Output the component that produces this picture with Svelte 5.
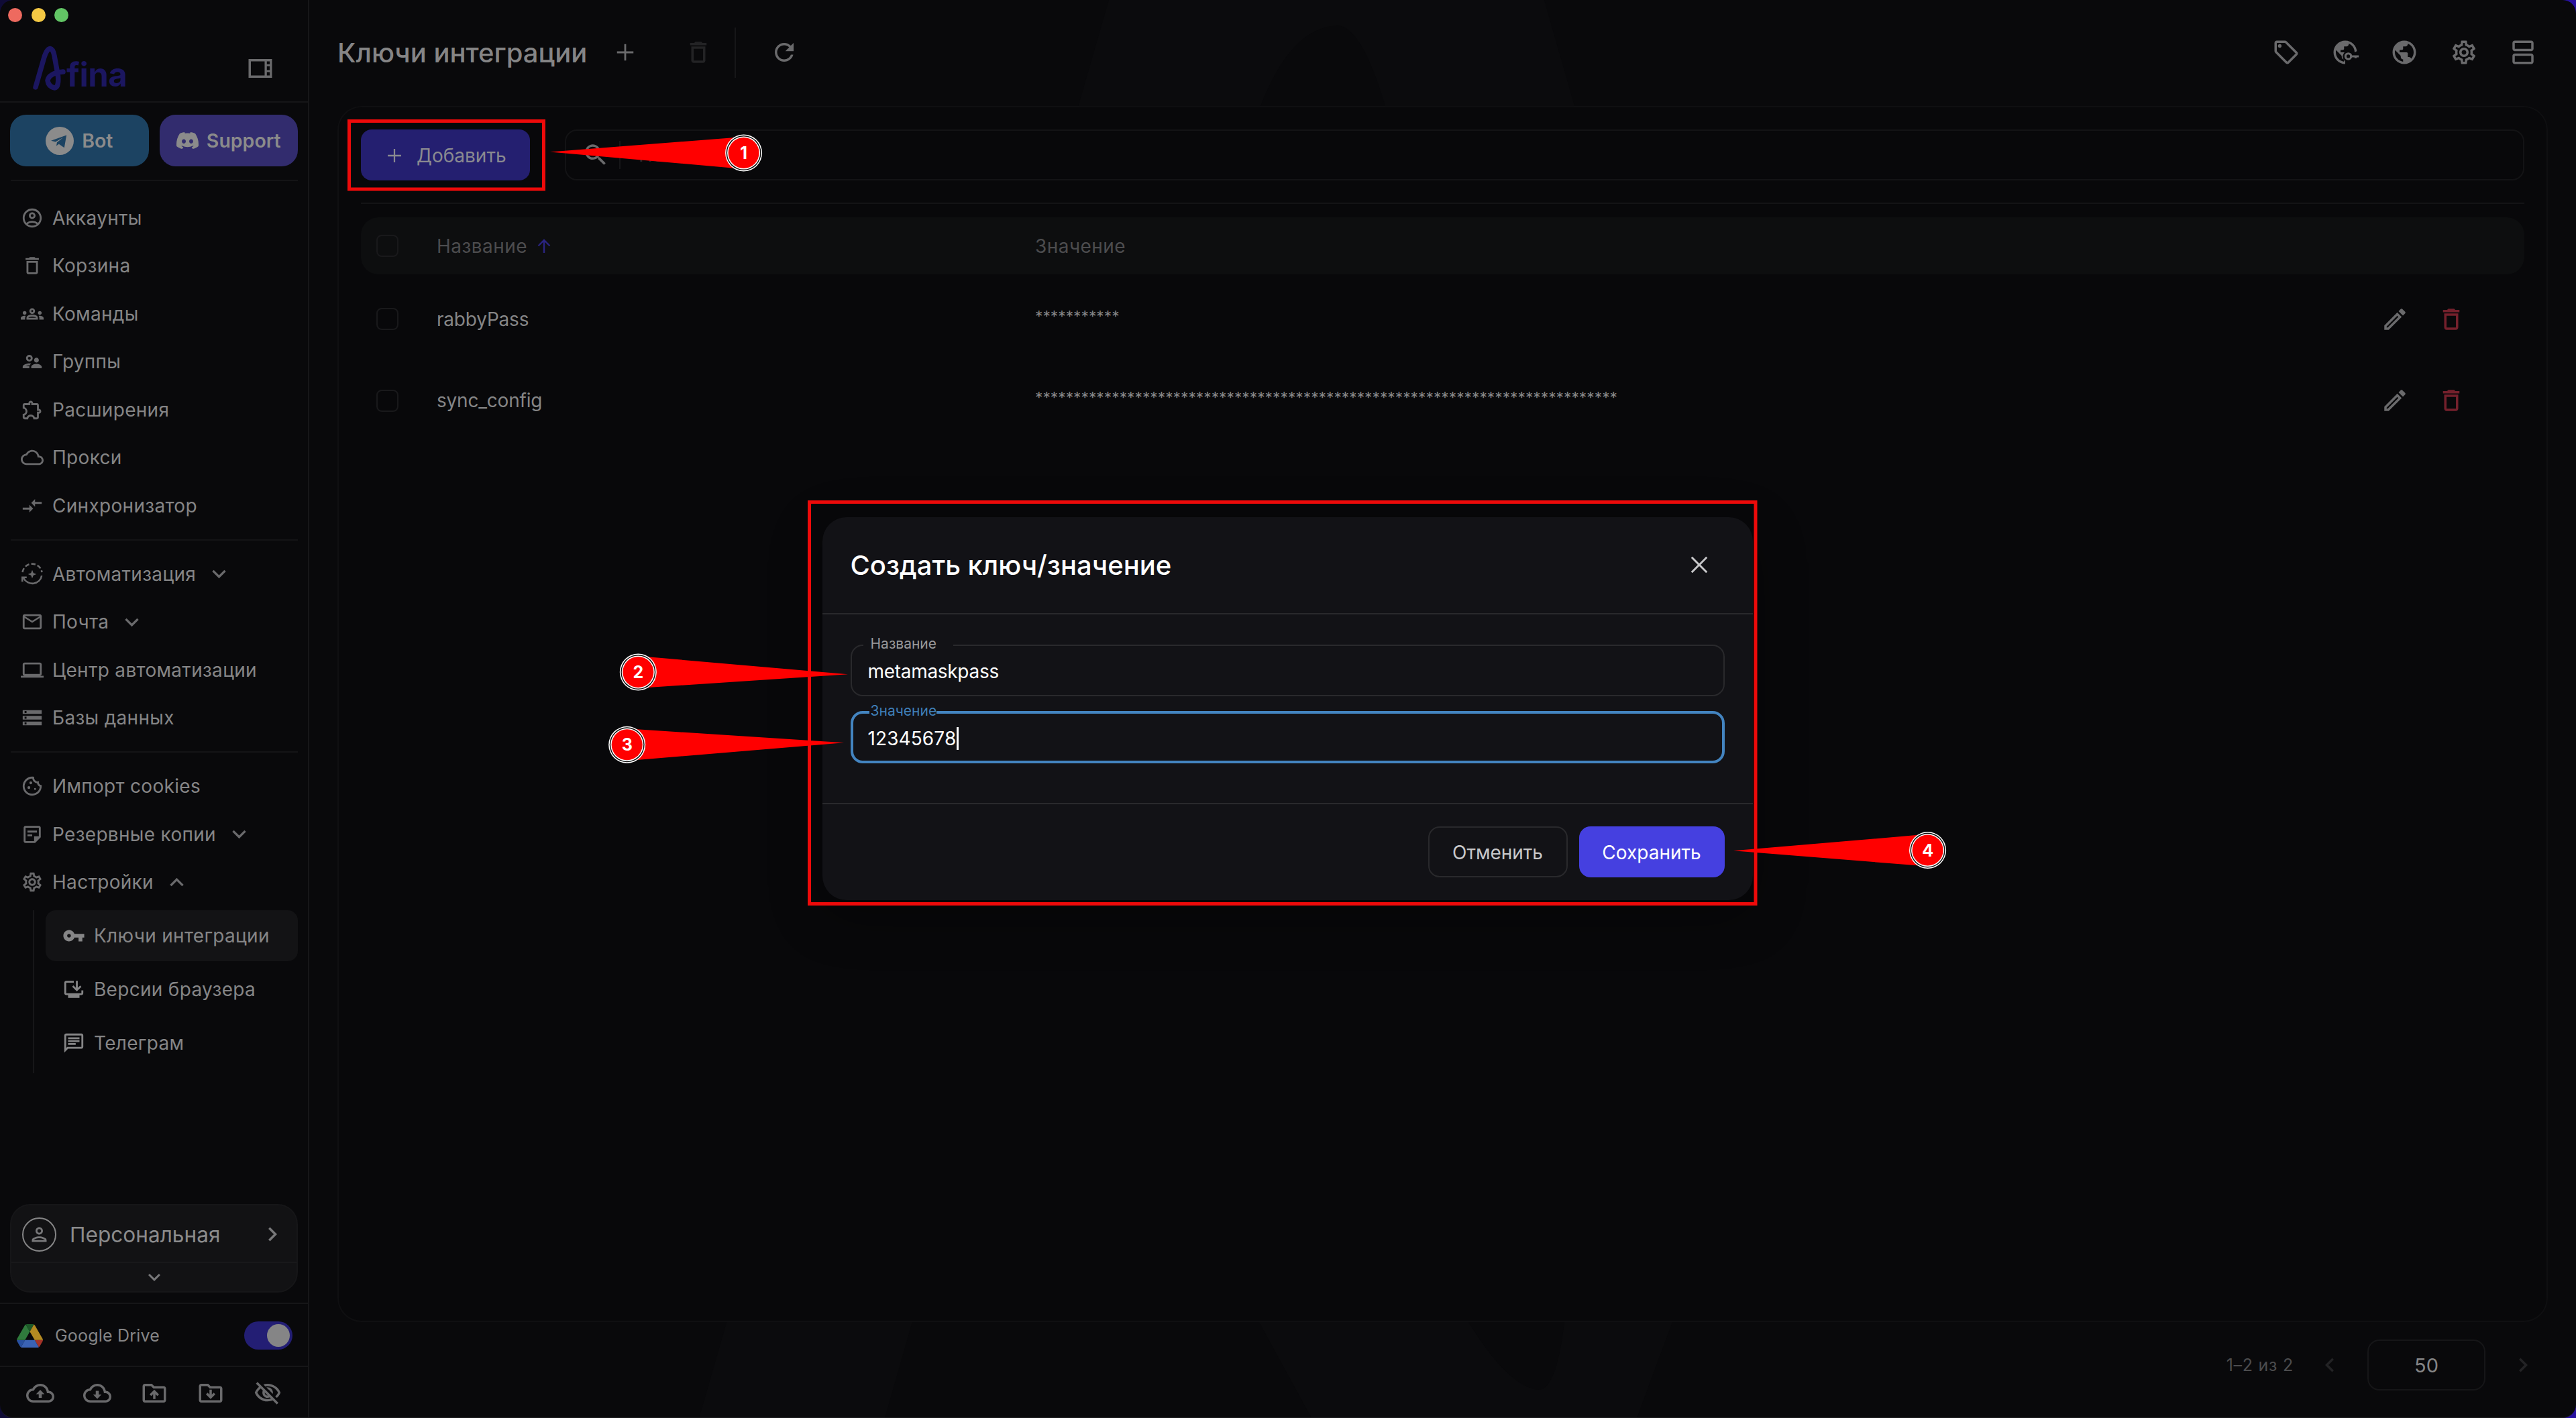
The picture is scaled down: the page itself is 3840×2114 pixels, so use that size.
<script lang="ts">
	type IconName = keyof typeof icons;

	interface NavItem {
		label: string;
		icon: IconName;
		chevron?: 'down' | 'up';
	}

	const icons = {
		account:
			'M12 2C6.48 2 2 6.48 2 12s4.48 10 10 10 10-4.48 10-10S17.52 2 12 2M7.35 18.5C8.66 17.56 10.26 17 12 17s3.34.56 4.65 1.5c-1.31.94-2.91 1.5-4.65 1.5s-3.34-.56-4.65-1.5m10.79-1.38C16.45 15.8 14.32 15 12 15s-4.45.8-6.14 2.12C4.7 15.73 4 13.95 4 12c0-4.42 3.58-8 8-8s8 3.58 8 8c0 1.95-.7 3.73-1.86 5.12M12 6c-1.93 0-3.5 1.57-3.5 3.5S10.07 13 12 13s3.5-1.57 3.5-3.5S13.93 6 12 6m0 5c-.83 0-1.5-.67-1.5-1.5S11.17 8 12 8s1.5.67 1.5 1.5S12.83 11 12 11',
		trash:
			'M6 19c0 1.1.9 2 2 2h8c1.1 0 2-.9 2-2V7H6zM8 9h8v10H8zm7.5-5-1-1h-5l-1 1H5v2h14V4z',
		groups:
			'M4 13c1.1 0 2-.9 2-2s-.9-2-2-2-2 .9-2 2 .9 2 2 2m1.13 1.1c-.37-.06-.74-.1-1.13-.1-.99 0-1.93.21-2.78.58C.48 14.9 0 15.62 0 16.43V18h4.5v-1.61c0-.83.23-1.61.63-2.29M20 13c1.1 0 2-.9 2-2s-.9-2-2-2-2 .9-2 2 .9 2 2 2m4 3.43c0-.81-.48-1.53-1.22-1.85-.85-.37-1.79-.58-2.78-.58-.39 0-.76.04-1.13.1.4.68.63 1.46.63 2.29V18H24zm-7.76-2.78c-1.17-.52-2.61-.9-4.24-.9s-3.07.39-4.24.9C6.68 14.13 6 15.21 6 16.39V18h12v-1.61c0-1.18-.68-2.26-1.76-2.74M8.07 16c.09-.23.13-.39.91-.69.97-.38 1.99-.56 3.02-.56s2.05.18 3.02.56c.77.3.81.46.91.69zM12 8c.55 0 1 .45 1 1s-.45 1-1 1-1-.45-1-1 .45-1 1-1m0-2c-1.66 0-3 1.34-3 3s1.34 3 3 3 3-1.34 3-3-1.34-3-3-3',
		supervisor:
			'M9 12c1.93 0 3.5-1.57 3.5-3.5S10.93 5 9 5 5.5 6.57 5.5 8.5 7.07 12 9 12m0-5c.83 0 1.5.67 1.5 1.5S9.83 10 9 10s-1.5-.67-1.5-1.5S8.17 7 9 7m.05 10H4.77c.99-.5 2.7-1 4.23-1 .11 0 .23.01.34.01.34-.73.93-1.33 1.64-1.81-.73-.13-1.42-.2-1.98-.2-2.34 0-7 1.17-7 3.5V19h7v-1.5c0-.17.02-.34.05-.5m7.45-2.5c-1.84 0-5.5 1.01-5.5 3V19h11v-1.5c0-1.99-3.66-3-5.5-3m1.21-1.82c.76-.43 1.29-1.24 1.29-2.18C19 9.12 17.88 8 16.5 8S14 9.12 14 10.5c0 .94.53 1.75 1.29 2.18.36.2.77.32 1.21.32s.85-.12 1.21-.32',
		extension:
			'M10.5 4.5c.28 0 .5.22.5.5v2h6v6h2c.28 0 .5.22.5.5s-.22.5-.5.5h-2v6h-2.12c-.68-1.75-2.39-3-4.38-3s-3.7 1.25-4.38 3H4v-2.12c1.75-.68 3-2.39 3-4.38 0-1.99-1.24-3.7-2.99-4.38L4 7h6V5c0-.28.22-.5.5-.5m0-2C9.12 2.5 8 3.62 8 5H4c-1.1 0-1.99.9-1.99 2v3.8h.29c1.49 0 2.7 1.21 2.7 2.7s-1.21 2.7-2.7 2.7H2V20c0 1.1.9 2 2 2h3.8v-.3c0-1.49 1.21-2.7 2.7-2.7s2.7 1.21 2.7 2.7v.3H17c1.1 0 2-.9 2-2v-4c1.38 0 2.5-1.12 2.5-2.5S20.38 11 19 11V7c0-1.1-.9-2-2-2h-4c0-1.38-1.12-2.5-2.5-2.5',
		cloud:
			'M19.35 10.04C18.67 6.59 15.64 4 12 4 9.11 4 6.6 5.64 5.35 8.04 2.34 8.36 0 10.91 0 14c0 3.31 2.69 6 6 6h13c2.76 0 5-2.24 5-5 0-2.64-2.05-4.78-4.65-4.96M19 18H6c-2.21 0-4-1.79-4-4 0-2.05 1.53-3.76 3.56-3.97l1.07-.11.5-.95C8.08 7.14 9.94 6 12 6c2.62 0 4.88 1.86 5.39 4.43l.3 1.5 1.53.11c1.56.1 2.78 1.41 2.78 2.96 0 1.65-1.35 3-3 3',
		sync: 'M9.01 14H2v2h7.01v3L13 15l-3.99-4zm5.98-1v-3H22V8h-7.01V5L11 9z',
		automation: 'M12 7.6l1.25 3.15L16.4 12l-3.15 1.25L12 16.4l-1.25-3.15L7.6 12l3.15-1.25z',
		mail: 'M22 6c0-1.1-.9-2-2-2H4c-1.1 0-2 .9-2 2v12c0 1.1.9 2 2 2h16c1.1 0 2-.9 2-2zm-2 0-8 5-8-5zm0 12H4V8l8 5 8-5z',
		laptop:
			'M20 18c1.1 0 1.99-.9 1.99-2L22 6c0-1.1-.9-2-2-2H4c-1.1 0-2 .9-2 2v10c0 1.1.9 2 2 2H0v2h24v-2zM4 6h16v10H4z',
		storage:
			'M2 20h20v-4H2zm2-3h2v2H4zM2 4v4h20V4zm4 3H4V5h2zm-4 7h20v-4H2zm2-3h2v2H4z',
		cookie:
			'M21.95 10.99c-1.79-.03-3.7-1.95-2.68-4.22-2.98 1-5.77-1.59-5.19-4.56C6.95.71 2 6.58 2 12c0 5.52 4.48 10 10 10 5.89 0 10.54-5.08 9.95-11.01M12 20c-4.41 0-8-3.59-8-8 0-3.31 2.73-8.18 8.08-8.02.42 2.54 2.44 4.56 4.99 4.94.07.36.52 2.55 2.92 3.63C19.7 16.86 16.06 20 12 20M10.5 7a1.5 1.5 0 1 0 0 3 1.5 1.5 0 0 0 0-3m-2 5a1.5 1.5 0 1 0 0 3 1.5 1.5 0 0 0 0-3m6.5 2a1 1 0 1 0 0 2 1 1 0 0 0 0-2',
		note: 'M5 3h14c1.1 0 2 .9 2 2v10l-6 6H5c-1.1 0-2-.9-2-2V5c0-1.1.9-2 2-2m0 2v14h9v-5h5V5zm2 3h10v2H7zm0 4h5v2H7z',
		settings:
			'M19.43 12.98c.04-.32.07-.64.07-.98s-.03-.66-.07-.98l2.11-1.65c.19-.15.24-.42.12-.64l-2-3.46c-.09-.16-.26-.25-.44-.25-.06 0-.12.01-.17.03l-2.49 1c-.52-.4-1.08-.73-1.69-.98l-.38-2.65C14.46 2.18 14.25 2 14 2h-4c-.25 0-.46.18-.49.42l-.38 2.65c-.61.25-1.17.59-1.69.98l-2.49-1c-.06-.02-.12-.03-.18-.03-.17 0-.34.09-.43.25l-2 3.46c-.13.22-.07.49.12.64l2.11 1.65c-.04.32-.07.65-.07.98s.03.66.07.98l-2.11 1.65c-.19.15-.24.42-.12.64l2 3.46c.09.16.26.25.44.25.06 0 .12-.01.17-.03l2.49-1c.52.4 1.08.73 1.69.98l.38 2.65c.03.24.24.42.49.42h4c.25 0 .46-.18.49-.42l.38-2.65c.61-.25 1.17-.59 1.69-.98l2.49 1c.06.02.12.03.18.03.17 0 .34-.09.43-.25l2-3.46c.12-.22.07-.49-.12-.64zm-1.98-1.71c.04.31.05.52.05.73s-.02.43-.05.73l-.14 1.13.89.7 1.08.84-.7 1.21-1.27-.51-1.04-.42-.9.68c-.43.32-.84.56-1.25.73l-1.06.43-.16 1.13-.2 1.35h-1.4l-.19-1.35-.16-1.13-1.06-.43c-.43-.18-.83-.41-1.23-.71l-.91-.7-1.06.43-1.27.51-.7-1.21 1.08-.84.89-.7-.14-1.13c-.03-.31-.05-.54-.05-.74s.02-.43.05-.73l.14-1.13-.89-.7-1.08-.84.7-1.21 1.27.51 1.04.42.9-.68c.43-.32.84-.56 1.25-.73l1.06-.43.16-1.13.2-1.35h1.39l.19 1.35.16 1.13 1.06.43c.43.18.83.41 1.23.71l.91.7 1.06-.43 1.27-.51.7 1.21-1.07.85-.89.7zM12 8c-2.21 0-4 1.79-4 4s1.79 4 4 4 4-1.79 4-4-1.79-4-4-4m0 6c-1.1 0-2-.9-2-2s.9-2 2-2 2 .9 2 2-.9 2-2 2',
		key: 'M12.65 10C11.83 7.67 9.61 6 7 6c-3.31 0-6 2.69-6 6s2.69 6 6 6c2.61 0 4.83-1.67 5.65-4H17v4h4v-4h2v-4zM7 14c-1.1 0-2-.9-2-2s.9-2 2-2 2 .9 2 2-.9 2-2 2',
		browser:
			'M22 13v3c0 1.1-.9 2-2 2h-2v3H6v-3H4c-1.1 0-2-.9-2-2V5c0-1.1.9-2 2-2h8v2H4v11h16v-3zm-6.8 1.2 4.9-4.9-1.41-1.41L16.2 10.37V3h-2v7.37l-2.59-2.58L10.2 9.2z',
		chat: 'M4 4h16v12H5.17L4 17.17zm0-2c-1.1 0-1.99.9-1.99 2L2 22l4-4h14c1.1 0 2-.9 2-2V4c0-1.1-.9-2-2-2zm2 10h8v2H6zm0-3h12v2H6zm0-3h12v2H6z',
		down: 'M7.41 8.59 12 13.17l4.59-4.58L18 10l-6 6-6-6z',
		up: 'M7.41 15.41 12 10.83l4.59 4.58L18 14l-6-6-6 6z',
		right: 'M10 6 8.59 7.41 13.17 12l-4.58 4.59L10 18l6-6z',
		left: 'M15.41 7.41 14 6l-6 6 6 6 1.41-1.41L10.83 12z',
		person:
			'M12 6c1.1 0 2 .9 2 2s-.9 2-2 2-2-.9-2-2 .9-2 2-2m0 10c2.7 0 5.8 1.29 6 2H6c.23-.72 3.31-2 6-2m0-12C9.79 4 8 5.79 8 8s1.79 4 4 4 4-1.79 4-4-1.79-4-4-4m0 10c-2.67 0-8 1.34-8 4v2h16v-2c0-2.66-5.33-4-8-4',
		folderUp:
			'M20 6h-8l-2-2H4c-1.1 0-1.99.9-1.99 2L2 18c0 1.1.9 2 2 2h16c1.1 0 2-.9 2-2V8c0-1.1-.9-2-2-2m0 12H4V6h5.17l2 2H20zM9.41 14.42 11 12.84V17h2v-4.16l1.59 1.59L16 13.01 12.01 9 8 13.01z',
		folderDown:
			'M20 6h-8l-2-2H4c-1.1 0-1.99.9-1.99 2L2 18c0 1.1.9 2 2 2h16c1.1 0 2-.9 2-2V8c0-1.1-.9-2-2-2m0 12H4V6h5.17l2 2H20zM14.59 11.58 13 13.16V9h-2v4.16l-1.59-1.59L8 12.99 11.99 17 16 12.99z',
		hidden:
			'M12 6c3.79 0 7.17 2.13 8.82 5.5-.59 1.22-1.42 2.27-2.41 3.12l1.41 1.41c1.39-1.23 2.49-2.77 3.18-4.53C21.27 7.11 17 4 12 4c-1.27 0-2.49.2-3.64.57l1.65 1.65C10.66 6.09 11.32 6 12 6m-1.07 1.14L13 9.21c.57.25 1.03.71 1.28 1.28l2.07 2.07c.08-.34.14-.7.14-1.07C16.5 9.01 14.48 7 12 7c-.37 0-.72.05-1.07.14M2.01 3.87l2.68 2.68C3.06 7.83 1.77 9.53 1 11.5 2.73 15.89 7 19 12 19c1.52 0 2.98-.29 4.32-.82l3.42 3.42 1.41-1.41L3.42 2.45zm7.5 7.5 2.61 2.61c-.04.01-.08.02-.12.02-1.38 0-2.5-1.12-2.5-2.5 0-.05.01-.08.01-.13m-3.4-3.4 1.75 1.75c-.23.55-.36 1.15-.36 1.78 0 2.48 2.02 4.5 4.5 4.5.63 0 1.23-.13 1.77-.36l.98.98c-.88.24-1.8.38-2.75.38-3.79 0-7.17-2.13-8.82-5.5.7-1.43 1.72-2.61 2.93-3.53',
		refresh:
			'M17.65 6.35C16.2 4.9 14.21 4 12 4c-4.42 0-7.99 3.58-7.99 8s3.57 8 7.99 8c3.73 0 6.84-2.55 7.73-6h-2.08c-.82 2.33-3.04 4-5.65 4-3.31 0-6-2.69-6-6s2.69-6 6-6c1.66 0 3.14.69 4.22 1.78L13 11h7V4z',
		search:
			'M15.5 14h-.79l-.28-.27C15.41 12.59 16 11.11 16 9.5 16 5.91 13.09 3 9.5 3S3 5.91 3 9.5 5.91 16 9.5 16c1.61 0 3.09-.59 4.23-1.57l.27.28v.79l5 4.99L20.49 19zm-6 0C7.01 14 5 11.99 5 9.5S7.01 5 9.5 5 14 7.01 14 9.5 11.99 14 9.5 14',
		edit: 'm14.06 9.02.92.92L5.92 19H5v-.92zM17.66 3c-.25 0-.51.1-.7.29l-1.83 1.83 3.75 3.75 1.83-1.83c.39-.39.39-1.02 0-1.41l-2.34-2.34c-.2-.2-.45-.29-.71-.29m-3.6 3.19L3 17.25V21h3.75L17.81 9.94z',
		add: 'M19 12.8h-6.2V19h-1.6v-6.2H5v-1.6h6.2V5h1.6v6.2H19z',
		tag: 'm21.41 11.58-9-9C12.05 2.22 11.55 2 11 2H4c-1.1 0-2 .9-2 2v7c0 .55.22 1.05.59 1.42l9 9c.36.36.86.58 1.41.58s1.05-.22 1.41-.59l7-7c.37-.36.59-.86.59-1.41s-.23-1.06-.59-1.42M13 20.01 4 11V4h7v-.01l9 9zM6.5 5a1.5 1.5 0 1 0 0 3 1.5 1.5 0 0 0 0-3',
		globe:
			'M12 2C6.48 2 2 6.48 2 12s4.48 10 10 10 10-4.48 10-10S17.52 2 12 2m-1 17.93c-3.95-.49-7-3.85-7-7.93 0-.62.08-1.21.21-1.79L9 15v1c0 1.1.9 2 2 2zm6.9-2.54c-.26-.81-1-1.39-1.9-1.39h-1v-3c0-.55-.45-1-1-1H8v-2h2c.55 0 1-.45 1-1V7h2c1.1 0 2-.9 2-2v-.41c2.93 1.19 5 4.06 5 7.41 0 2.08-.8 3.97-2.1 5.39',
		agenda:
			'M19 13H5c-1.1 0-2 .9-2 2v5c0 1.1.9 2 2 2h14c1.1 0 2-.9 2-2v-5c0-1.1-.9-2-2-2m0 7H5v-5h14zm0-18H5c-1.1 0-2 .9-2 2v5c0 1.1.9 2 2 2h14c1.1 0 2-.9 2-2V4c0-1.1-.9-2-2-2m0 7H5V4h14z',
		// inner windows are wound the other way round so they cut out
		panel:
			'M2 4v16h20V4zM4 6h11.7v12H4zm13.600 0h2.500v2.400h-2.500zm0 4.200h2.500v3.200h-2.500zm0 5h2.500V18h-2.500z',
		close:
			'M18.4 6.7 17.3 5.6 12 10.9 6.7 5.6 5.6 6.7 10.9 12l-5.3 5.3 1.1 1.1 5.3-5.3 5.3 5.3 1.1-1.1L13.1 12z',
		discord:
			'M20.317 4.37a19.79 19.79 0 0 0-4.885-1.515.074.074 0 0 0-.079.037c-.21.375-.444.865-.608 1.25a18.27 18.27 0 0 0-5.487 0 12.6 12.6 0 0 0-.617-1.25.077.077 0 0 0-.079-.037 19.74 19.74 0 0 0-4.885 1.515.07.07 0 0 0-.032.028C.533 9.046-.319 13.58.099 18.058a.082.082 0 0 0 .031.056c2.053 1.508 4.041 2.423 5.993 3.03a.078.078 0 0 0 .084-.028c.462-.63.873-1.295 1.226-1.994a.076.076 0 0 0-.042-.106 13.1 13.1 0 0 1-1.872-.892.077.077 0 0 1-.008-.128c.126-.094.252-.192.372-.291a.074.074 0 0 1 .078-.01c3.928 1.793 8.18 1.793 12.061 0a.074.074 0 0 1 .079.009c.12.099.246.198.373.292a.077.077 0 0 1-.007.128c-.598.35-1.22.645-1.873.891a.077.077 0 0 0-.041.107c.36.698.772 1.363 1.225 1.993a.076.076 0 0 0 .084.029c1.961-.607 3.95-1.522 6.002-3.03a.077.077 0 0 0 .032-.055c.5-5.177-.838-9.674-3.549-13.66a.061.061 0 0 0-.031-.029M8.02 15.331c-1.182 0-2.157-1.086-2.157-2.419s.956-2.419 2.157-2.419c1.21 0 2.176 1.095 2.157 2.419 0 1.333-.956 2.419-2.157 2.419m7.975 0c-1.183 0-2.157-1.086-2.157-2.419s.955-2.419 2.157-2.419c1.21 0 2.176 1.095 2.157 2.419 0 1.333-.946 2.419-2.157 2.419'
	};

	const navGroups: NavItem[][] = [
		[
			{ label: 'Аккаунты', icon: 'account' },
			{ label: 'Корзина', icon: 'trash' },
			{ label: 'Команды', icon: 'groups' },
			{ label: 'Группы', icon: 'supervisor' },
			{ label: 'Расширения', icon: 'extension' },
			{ label: 'Прокси', icon: 'cloud' },
			{ label: 'Синхронизатор', icon: 'sync' }
		],
		[
			{ label: 'Автоматизация', icon: 'automation', chevron: 'down' },
			{ label: 'Почта', icon: 'mail', chevron: 'down' },
			{ label: 'Центр автоматизации', icon: 'laptop' },
			{ label: 'Базы данных', icon: 'storage' }
		],
		[
			{ label: 'Импорт cookies', icon: 'cookie' },
			{ label: 'Резервные копии', icon: 'note', chevron: 'down' },
			{ label: 'Настройки', icon: 'settings', chevron: 'up' }
		]
	];

	const settingsItems: NavItem[] = [
		{ label: 'Ключи интеграции', icon: 'key' },
		{ label: 'Версии браузера', icon: 'browser' },
		{ label: 'Телеграм', icon: 'chat' }
	];

	const rows = [
		{ name: 'rabbyPass', value: '*'.repeat(11) },
		{ name: 'sync_config', value: '*'.repeat(76) }
	];

	const callouts = [
		{ n: 1, x: 1108.6, y: 228, tip: [820, 226.5] },
		{ n: 2, x: 951.3, y: 1002, tip: [1264, 1005.3] },
		{ n: 3, x: 934.7, y: 1110.3, tip: [1258, 1107.3] },
		{ n: 4, x: 2873.6, y: 1267.6, tip: [2584, 1268.3] }
	];

	let name = $state('metamaskpass');
	let value = $state('12345678');
</script>

{#snippet icon(id: IconName, size: number)}
	<svg class="icon" width={size} height={size} viewBox="0 0 24 24" aria-hidden="true">
		<path d={icons[id]} />
		{#if id === 'automation'}
			<path class="line" d="M22 13.5A10 9.6 0 0 1 3 16.2M1.6 20v-4.6h4.6" />
			<path class="line" stroke-dasharray="4.6 2.2" d="M1.8 10A10.3 10.3 0 0 1 22.2 10" />
		{/if}
	</svg>
{/snippet}

<div class="window">
	<aside class="sidebar">
		<div class="lights">
			<span class="light red"></span>
			<span class="light yellow"></span>
			<span class="light green"></span>
		</div>

		<div class="brand">
			<div class="logo">
				<svg width="52" height="70" viewBox="0 0 52 70" aria-hidden="true">
					<path
						d="M6 63 19 18Q23 5.500 28 5.500Q32 6 34 16L39.500 46Q41 63 34.500 64Q25 62 24 53Q26 42 47 40"
					/>
				</svg>
				<span>fina</span>
			</div>
			<span class="dim">{@render icon('panel', 42)}</span>
		</div>

		<div class="links">
			<button class="bot">
				<svg width="42" height="42" viewBox="0 0 24 24" aria-hidden="true">
					<circle cx="12" cy="12" r="12" fill="#8b8b8b" />
					<path
						d="M4.600 11.800 17.800 7.100 15.900 17.900 11.300 14.700 9.100 16.300 9.700 13.300 15 9.100 8.400 12.900z"
						fill="#1c4362"
					/>
				</svg>
				Bot
			</button>
			<button class="support">{@render icon('discord', 33)}Support</button>
		</div>

		{#each navGroups as group, i}
			<hr />
			<nav class:first={i === 0}>
				{#each group as item (item.label)}
					<a href="#top" class="nav-item">
						{@render icon(item.icon, 34)}
						<span>{item.label}</span>
						{#if item.chevron}
							<i class="chev">{@render icon(item.chevron, 41)}</i>
						{/if}
					</a>
				{/each}
			</nav>
		{/each}
		<div class="submenu">
			{#each settingsItems as item, i (item.label)}
				<a href="#top" class="sub-item" class:active={i === 0}>
					{@render icon(item.icon, 34)}
					<span>{item.label}</span>
				</a>
			{/each}
		</div>

		<div class="workspace">
			<div class="workspace-top">
				<span class="avatar">{@render icon('person', 33)}</span>
				<span class="workspace-name">Персональная</span>
				{@render icon('right', 42)}
			</div>
			<div class="workspace-more">{@render icon('down', 36)}</div>
		</div>

		<div class="drive">
			<svg width="39" height="35" viewBox="0 0 87.300 78" aria-hidden="true">
				<path fill="#2850a0" d="m6.600 66.850 3.850 6.650c.8 1.400 1.950 2.500 3.300 3.300L27.500 53H0c0 1.550.4 3.100 1.200 4.500z" />
				<path fill="#2f7a3c" d="M43.650 25 29.900 1.200c-1.350.8-2.500 1.900-3.300 3.300l-25.400 44A9.060 9.060 0 0 0 0 53h27.500z" />
				<path fill="#a33328" d="M73.550 76.800c1.350-.8 2.500-1.900 3.300-3.300l9.250-16c.8-1.400 1.200-2.950 1.200-4.500H59.800z" />
				<path fill="#1d5a29" d="M43.650 25 57.400 1.200C56.050.4 54.500 0 52.900 0H34.400c-1.600 0-3.150.45-4.500 1.200z" />
				<path fill="#3a62b4" d="M59.800 53H27.500L13.750 76.800c1.350.8 2.900 1.200 4.500 1.200h50.800c1.600 0 3.150-.45 4.500-1.200z" />
				<path fill="#b58a22" d="m73.400 26.500-12.700-22c-.8-1.400-1.950-2.500-3.300-3.300L43.650 25l16.150 28h27.450c0-1.550-.4-3.100-1.200-4.500z" />
			</svg>
			<span>Google Drive</span>
			<span class="toggle"></span>
		</div>

		<div class="tools">
			<svg class="icon" width="42" height="42" viewBox="0 0 24 24" aria-hidden="true">
				<path d={icons.cloud} />
				<path d="M8.400 12.800h2.300v3.200h2.600v-3.200h2.300L12 9.200z" />
			</svg>
			<svg class="icon" width="42" height="42" viewBox="0 0 24 24" aria-hidden="true">
				<path d={icons.cloud} />
				<path d="M8.400 13.200h2.300V10h2.600v3.200h2.300L12 16.800z" />
			</svg>
			{@render icon('folderUp', 42)}
			{@render icon('folderDown', 42)}
			{@render icon('hidden', 42)}
		</div>
	</aside>

	<main class="content">
		<!-- oversized brand mark, visible above and below the panel -->
		<svg class="watermark" width="3379" height="2114" viewBox="461 0 3379 2114" aria-hidden="true">
			<path d="M1653 0 1042 2114H1319L1879 158Q1925 40 1994 38Q2030 40 2065 158L2347 158 2302 0z" />
			<path d="M1877 1971 1955 2114H2440L2493 1971H2332Q2320 2070 2295 2072Q2250 2070 2189 1971z" />
		</svg>

		<header class="topbar">
			<h1>Ключи интеграции</h1>
			<span class="top-add">{@render icon('add', 42)}</span>
			<span class="top-trash">{@render icon('trash', 42)}</span>
			<span class="top-sep"></span>
			{@render icon('refresh', 42)}
			<div class="top-actions">
				{@render icon('tag', 42)}
				<svg class="icon" width="42" height="42" viewBox="0 0 24 24" aria-hidden="true">
					<mask id="key-cut">
						<rect width="24" height="24" fill="#fff" />
						<path
							d="M12 24V19.500A4.600 4.600 0 0 1 10.400 13.500 4.600 4.600 0 0 1 18.500 12.700L24 10V24z"
							fill="#000"
						/>
					</mask>
					<path d={icons.globe} mask="url(#key-cut)" />
					<circle class="line" cx="14.600" cy="15.400" r="2.400" />
					<path class="line" d="M17 15.400h6.500M20.800 15.400v1.600" />
				</svg>
				{@render icon('globe', 42)}
				{@render icon('settings', 42)}
				{@render icon('agenda', 42)}
			</div>
		</header>

		<section class="panel">
			<div class="toolbar">
				<button class="add">{@render icon('add', 34)}<span>Добавить</span></button>
				<div class="search">
					{@render icon('search', 42)}
					<i></i>
					<span>Поиск</span>
				</div>
			</div>

			<div class="row head">
				<span class="check"></span>
				<span class="head-name">
					Название
					<svg width="20" height="22" viewBox="0 0 20 22" aria-hidden="true">
						<path d="M10 21V2M1.500 10.500 10 2l8.500 8.500" />
					</svg>
				</span>
				<span>Значение</span>
			</div>
			{#each rows as row (row.name)}
				<div class="row">
					<span class="check"></span>
					<span class="key-name">{row.name}</span>
					<span class="secret">{row.value}</span>
					<span class="row-actions">
						{@render icon('edit', 42)}
						<i>{@render icon('trash', 42)}</i>
					</span>
				</div>
			{/each}
		</section>

		<footer class="pager">
			<span class="range">1–2 из 2</span>
			{@render icon('left', 42)}
			<span class="page-size">50</span>
			{@render icon('right', 42)}
		</footer>
	</main>
</div>

<div class="backdrop">
	<div class="modal" role="dialog" aria-modal="true">
		<div class="modal-head">
			<h2>Создать ключ/значение</h2>
			{@render icon('close', 46)}
		</div>
		<div class="modal-body">
			<div class="field">
				<fieldset><legend></legend></fieldset>
				<span class="label">Название</span>
				<span class="input">{name}</span>
			</div>
			<div class="field focused">
				<fieldset><legend></legend></fieldset>
				<span class="label">Значение</span>
				<span class="input">{value}<i class="caret"></i></span>
			</div>
		</div>
		<div class="modal-foot">
			<button class="cancel">Отменить</button>
			<button class="save">Сохранить</button>
		</div>
	</div>
</div>

<svg class="callouts" width="3840" height="2114" viewBox="0 0 3840 2114">
	<rect x="520.500" y="180.500" width="290" height="101.500" />
	<rect x="1206.500" y="748.500" width="1410.500" height="599" />
	{#each callouts as c (c.n)}
		<polygon points="{c.x},{c.y - 24} {c.tip[0]},{c.tip[1]} {c.x},{c.y + 24}" />
		<circle cx={c.x} cy={c.y} r="27.500" fill="#fff" />
		<circle cx={c.x} cy={c.y} r="26" fill="#111" />
		<circle cx={c.x} cy={c.y} r="24.500" fill="#fff" />
		<circle cx={c.x} cy={c.y} r="23" fill="#f00" />
		<text x={c.x} y={c.y + 9}>{c.n}</text>
	{/each}
</svg>

<style>
	:global(body) {
		background: linear-gradient(to right, #0f0b36 50%, #2711a0 50%);
		overflow: hidden;
	}

	.window {
		display: flex;
		box-sizing: border-box;
		width: 3840px;
		height: 2114px;
		background: #09090b;
		border-radius: 20px;
		border-bottom: 1px solid #1c1c1e;
		overflow: hidden;
		font-family: Inter, 'Liberation Sans', sans-serif;
		font-size: 28px;
		color: #858586;
	}

	button {
		border: 0;
		font: inherit;
		color: inherit;
	}

	h1,
	h2 {
		margin: 0;
		font-size: 40px;
		font-weight: 500;
		white-space: nowrap;
	}

	.icon {
		flex: none;
		display: block;
		fill: currentColor;
	}

	.line {
		fill: none;
		stroke: currentColor;
		stroke-width: 1.8;
	}

	/* sidebar */
	.sidebar {
		display: flex;
		flex-direction: column;
		box-sizing: border-box;
		flex: none;
		width: 461px;
		border-right: 2px solid #161618;
	}

	.lights {
		display: flex;
		gap: 13.5px;
		padding: 12px 12px 0;
	}

	.light {
		width: 21px;
		height: 21px;
		border-radius: 50%;
	}

	.red {
		background: #ee6a5f;
	}

	.yellow {
		background: #f5c944;
	}

	.green {
		background: #62c565;
	}

	.brand {
		display: flex;
		justify-content: space-between;
		align-items: center;
		box-sizing: border-box;
		height: 120px;
		padding: 40px 50px 20px 47px;
		border-bottom: 2px solid #161618;
	}

	.logo {
		display: flex;
		align-items: flex-end;
		color: #1b1660;
		font-size: 49px;
		font-weight: 700;
		line-height: 60px;
		letter-spacing: -0.5px;
	}

	.logo path {
		fill: none;
		stroke: currentColor;
		stroke-width: 7.5;
		stroke-linecap: round;
		stroke-linejoin: round;
	}

	.logo span {
		margin-bottom: -5px;
	}

	.dim {
		color: #6a6a6c;
	}

	.links {
		display: flex;
		gap: 16px;
		padding: 18px 15px 20px;
	}

	.links button {
		display: flex;
		align-items: center;
		justify-content: center;
		flex: 1;
		gap: 12px;
		height: 77px;
		padding: 0;
		border-radius: 24px;
		font-size: 28.5px;
		font-weight: 600;
		color: #8b8b8b;
	}

	.bot {
		background: #1c4362;
	}

	.support {
		background: #322c6e;
	}

	hr {
		flex: none;
		width: 428px;
		height: 2px;
		margin: 0 auto;
		border: 0;
		background: #141416;
	}

	nav {
		padding: 14.5px 0 14px;
	}

	nav.first {
		padding: 19px 0 14px;
	}

	.nav-item {
		display: flex;
		align-items: center;
		height: 71.5px;
		padding-left: 31px;
		color: #6a6a6c;
		text-decoration: none;
	}

	.nav-item span,
	.sub-item span {
		margin-left: 13px;
		color: #858586;
		letter-spacing: 0.3px;
		white-space: nowrap;
	}

	.chev {
		margin-left: 14px;
	}

	.submenu {
		display: flex;
		flex-direction: column;
		gap: 4px;
		margin: -8.5px 15px 0 49px;
		padding-left: 17px;
		padding-bottom: 7px;
		border-left: 2px solid #161618;
	}

	.sub-item {
		display: flex;
		align-items: center;
		height: 76px;
		padding-left: 25px;
		border-radius: 15px;
		color: #858586;
		text-decoration: none;
	}

	.active {
		background: #131315;
	}

	.workspace {
		margin: auto 15px 15px;
		border: 2px solid #161618;
		border-radius: 30px;
		background: #121214;
	}

	.workspace-top {
		display: flex;
		align-items: center;
		box-sizing: border-box;
		height: 86px;
		padding: 2px 15px 0 16px;
		border-bottom: 2px solid #18181a;
		color: #78787a;
	}

	.avatar {
		display: flex;
		align-items: center;
		justify-content: center;
		width: 47px;
		height: 47px;
		border: 2px solid #858586;
		border-radius: 50%;
	}

	.workspace-name {
		flex: 1;
		margin-left: 20px;
		font-size: 31.6px;
		color: #8b8b8c;
	}

	.workspace-more {
		display: flex;
		align-items: center;
		justify-content: center;
		height: 42px;
		color: #78787a;
	}

	.drive {
		display: flex;
		align-items: center;
		box-sizing: border-box;
		height: 96px;
		padding: 2px 23px 0 25px;
		border-top: 2px solid #161618;
		border-bottom: 2px solid #161618;
		font-size: 25px;
		letter-spacing: 0.2px;
	}

	.drive span:nth-child(2) {
		flex: 1;
		margin-left: 18px;
	}

	.toggle {
		display: flex;
		justify-content: flex-end;
		box-sizing: border-box;
		width: 72px;
		height: 42px;
		padding: 4px;
		border-radius: 21px;
		background: #231e74;
	}

	.toggle::after {
		content: '';
		width: 34px;
		height: 34px;
		border-radius: 50%;
		background: #858586;
	}

	.tools {
		display: flex;
		justify-content: space-between;
		align-items: center;
		height: 73px;
		padding: 2px 39px 0;
		color: #6a6a6c;
	}

	/* main area */
	.content {
		position: relative;
		display: flex;
		flex-direction: column;
		flex: 1;
		min-width: 0;
	}

	.watermark {
		position: absolute;
		inset: 0;
		fill: #0b0b0d;
	}

	.topbar {
		position: relative;
		display: flex;
		align-items: center;
		box-sizing: border-box;
		height: 158px;
		padding: 0 58px 2px 42px;
		color: #6a6a6c;
	}

	h1 {
		width: 408px;
		color: #858586;
	}

	.top-trash {
		margin-left: 67px;
		color: #232325;
	}

	.top-sep {
		width: 2px;
		height: 75px;
		margin: 0 51px 0 33px;
		background: #161618;
	}

	.top-actions {
		display: flex;
		gap: 46.3px;
		margin-left: auto;
	}

	.panel {
		position: relative;
		box-sizing: border-box;
		height: 1813px;
		margin: 0 42px;
		padding: 33px 33px 0;
		border: 2px solid #0f0f11;
		border-radius: 36px;
		background: #08080a;
	}

	.toolbar {
		display: flex;
		gap: 52px;
		padding-bottom: 33px;
		border-bottom: 2px solid #131315;
	}

	.add {
		display: flex;
		align-items: center;
		width: 252px;
		height: 76px;
		padding: 1px 0 0 33px;
		border-radius: 16px;
		background: #241f70;
		color: #8a8a90;
	}

	.add span {
		margin-left: 16px;
	}

	.search {
		display: flex;
		align-items: center;
		box-sizing: border-box;
		flex: 1;
		height: 76px;
		padding-left: 23px;
		border: 2px solid #131315;
		border-radius: 18px;
		color: #6a6a6c;
	}

	.search i {
		width: 2px;
		height: 42px;
		margin: 0 27px 0 14px;
		background: #161618;
	}

	.search span {
		color: #2c2c2e;
	}

	.row {
		display: grid;
		grid-template-columns: 113px 892px 1fr auto;
		align-items: center;
		height: 121.5px;
		padding-right: 88px;
	}

	.head {
		box-sizing: border-box;
		height: 85px;
		margin: 19.5px 0 6.5px;
		padding-top: 1px;
		border-radius: 26px;
		background: #0d0e0f;
		color: #4c4c4e;
		letter-spacing: 0.45px;
	}

	.head-name {
		display: flex;
		align-items: center;
		gap: 15px;
	}

	.head-name svg {
		fill: none;
		stroke: #2a2480;
		stroke-width: 2.4;
	}

	.check {
		box-sizing: border-box;
		width: 33px;
		height: 33px;
		margin-left: 23px;
		border: 2px solid #19191b;
		border-radius: 8px;
	}

	.key-name {
		letter-spacing: -0.2px;
	}

	.secret {
		padding-bottom: 9px;
		font-size: 22.8px;
	}

	.row-actions {
		display: flex;
		gap: 42px;
		color: #6a6a6c;
	}

	.row-actions i {
		color: #74202c;
	}

	.pager {
		position: relative;
		display: flex;
		align-items: center;
		justify-content: flex-end;
		height: 127px;
		padding-right: 58px;
		color: #232325;
	}

	.range {
		margin-right: 33px;
		font-size: 25px;
		letter-spacing: 0.75px;
		color: #4c4c4e;
	}

	.page-size {
		box-sizing: border-box;
		width: 176px;
		height: 76px;
		margin: 0 35px;
		border: 2px solid #161618;
		border-radius: 18px;
		line-height: 73px;
		text-align: center;
		font-size: 29px;
		color: #858586;
	}

	/* dialog */
	.backdrop {
		position: absolute;
		inset: 0;
		display: flex;
		align-items: center;
		justify-content: center;
		width: 3838px;
		height: 2112px;
		font-family: Inter, 'Liberation Sans', sans-serif;
		font-size: 28px;
		color: #fff;
	}

	.modal {
		width: 1387px;
		height: 571px;
		border-radius: 36px;
		background: #121216;
		box-shadow: 0 22px 76px rgba(0, 0, 0, 0.4);
	}

	.modal-head {
		display: flex;
		align-items: center;
		justify-content: space-between;
		height: 143px;
		padding: 0 57px 0 42px;
		border-bottom: 2px solid #29292c;
	}

	.modal-head .icon {
		color: #c8c8ca;
	}

	.modal-body {
		display: flex;
		flex-direction: column;
		gap: 24px;
		height: 235.5px;
		padding: 46px 42px 0;
	}

	.field {
		position: relative;
		display: flex;
		align-items: center;
		height: 76px;
	}

	fieldset {
		position: absolute;
		inset: -6px 0 0;
		margin: 0;
		padding: 0 0 0 17px;
		border: 2px solid #29292c;
		border-radius: 18px;
	}

	legend {
		width: 134px;
		height: 12px;
		padding: 0;
	}

	.label {
		position: absolute;
		top: -15px;
		left: 30px;
		font-size: 21px;
		line-height: 26px;
		color: #9a9a9c;
	}

	.input {
		display: flex;
		align-items: center;
		margin: 2px 0 0 26px;
		letter-spacing: -0.3px;
	}

	.focused fieldset {
		padding-left: 24px;
		border: 4px solid #4384c0;
	}

	.focused legend {
		width: 100px;
	}

	.focused .label {
		color: #3f7fb8;
	}

	.focused .input {
		letter-spacing: 0.1px;
	}

	.caret {
		width: 3px;
		height: 34px;
		margin-left: 1px;
		background: #fff;
	}

	.modal-foot {
		display: flex;
		justify-content: flex-end;
		gap: 17px;
		padding: 33px 42px;
		border-top: 2px solid #29292c;
	}

	.modal-foot button {
		height: 76px;
		padding: 2px 0 0;
		border-radius: 17px;
	}

	.cancel {
		width: 208px;
		border: 2px solid #29292c;
		background: none;
		color: #c8c8ca;
	}

	.save {
		width: 217px;
		background: #4540e0;
	}

	/* numbered callouts */
	.callouts {
		position: absolute;
		inset: 0;
	}

	.callouts rect {
		fill: none;
		stroke: #ee0a0a;
		stroke-width: 5;
	}

	.callouts polygon {
		fill: #f00;
	}

	.callouts text {
		fill: #fff;
		font: 700 25px Inter, sans-serif;
		text-anchor: middle;
	}
</style>
